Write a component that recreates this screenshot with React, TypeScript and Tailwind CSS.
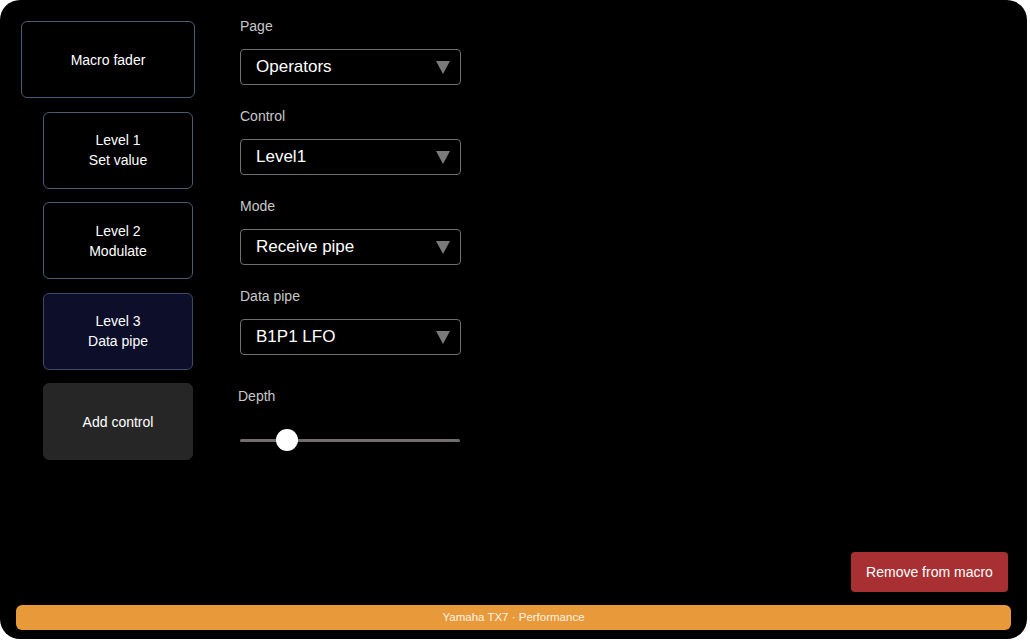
import React from "react";

const font = { fontFamily: '"Liberation Sans", Arial, sans-serif' };

function Card({ lines, variant, wide }: { lines: string[]; variant?: "active" | "add"; wide?: boolean }) {
  const base =
    variant === "active"
      ? "bg-[#0c0e2a] border border-[#3b4a66]"
      : variant === "add"
      ? "bg-[#262626] border border-[#262626]"
      : "bg-black border border-[#4a5a72]";
  return (
    <div
      className={`${base} ${wide ? "w-[174px] ml-0" : "w-[150px] ml-[22px]"} h-[77px] rounded-[6px] flex flex-col items-center justify-center text-white text-[14px] leading-[20px]`}
    >
      {lines.map((l) => (
        <div key={l}>{l}</div>
      ))}
    </div>
  );
}

function Select({ label, value }: { label: string; value: string }) {
  return (
    <div className="flex flex-col">
      <div className="text-[#c8c8c8] text-[14px] leading-[16px]">{label}</div>
      <div className="mt-[15px] w-[221px] h-[36px] border border-[#707070] rounded-[4px] flex items-center justify-between pl-[15px] pr-[10px]">
        <span className="text-white text-[17px]">{value}</span>
        <svg width="14" height="13" viewBox="0 0 14 13">
          <polygon points="0,0 14,0 7,13" fill="#7a7a7a" />
        </svg>
      </div>
    </div>
  );
}

export default function App() {
  return (
    <div className="w-[1030px] h-[641px] bg-white" style={font}>
      <div className="w-[1027px] h-[639px] bg-black rounded-[20px] flex flex-col">
        <div className="flex flex-1 pt-[21px] pl-[21px]">
          <div className="flex flex-col gap-[13.5px]">
            <Card lines={["Macro fader"]} wide />
            <Card lines={["Level 1", "Set value"]} />
            <Card lines={["Level 2", "Modulate"]} />
            <Card lines={["Level 3", "Data pipe"]} variant="active" />
            <Card lines={["Add control"]} variant="add" />
          </div>
          <div className="ml-[45px] -mt-[3px] flex flex-col gap-[23px]">
            <Select label="Page" value="Operators" />
            <Select label="Control" value="Level1" />
            <Select label="Mode" value="Receive pipe" />
            <Select label="Data pipe" value="B1P1 LFO" />
            <div className="flex flex-col -ml-[2px] mt-[10px]">
              <div className="text-[#c8c8c8] text-[14px] leading-[16px]">Depth</div>
              <div className="relative mt-[24px] ml-[2px] w-[220px] h-[24px] flex items-center">
                <div className="w-full h-[3px] bg-[#746c6c] rounded-full" />
                <div className="absolute left-[36px] top-[1px] w-[22px] h-[22px] rounded-full bg-white" />
              </div>
            </div>
          </div>
        </div>
        <div className="flex justify-end pr-[19px]">
          <button className="w-[157px] h-[40px] bg-[#a83033] rounded-[4px] text-white text-[14px]" style={font}>
            Remove from macro
          </button>
        </div>
        <div className="mx-[16px] mt-[13px] mb-[9px] h-[25px] bg-[#e8993a] rounded-[6px] flex items-center justify-center text-[#fdf2e4] text-[11.5px]">
          Yamaha TX7 · Performance
        </div>
      </div>
    </div>
  );
}
